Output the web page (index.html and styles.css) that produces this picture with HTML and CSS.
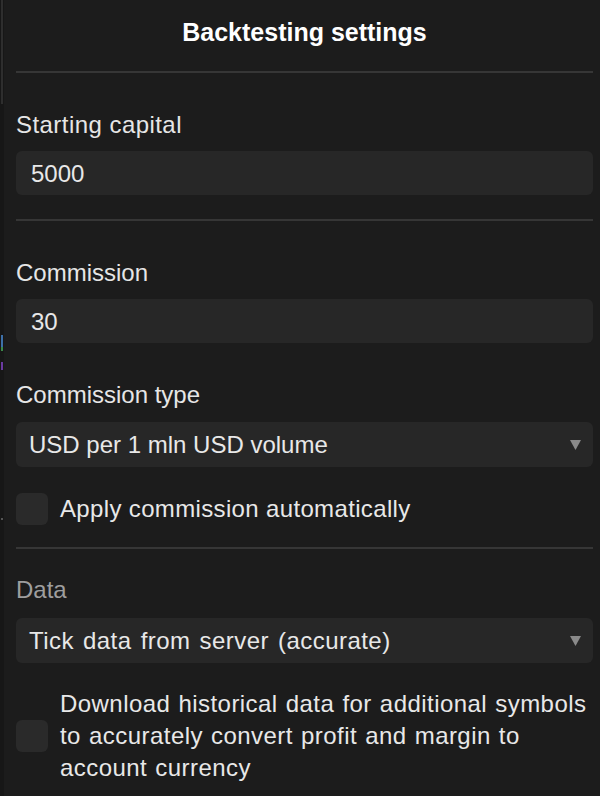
FILE: index.html
```html
<!DOCTYPE html>
<html lang="en">
<head>
<meta charset="utf-8">
<title>Backtesting settings</title>
<link rel="stylesheet" href="styles.css">
</head>
<body>
<div class="edge">
  <div class="edge-top"></div>
  <div class="edge-mark blue"></div>
  <div class="edge-mark green"></div>
  <div class="edge-mark purple"></div>
  <div class="edge-dot"></div>
</div>
<main class="panel">
  <header class="header">
    <h1 class="title">Backtesting settings</h1>
  </header>
  <div class="sep"></div>

  <section class="section">
    <div class="label label-wide">Starting capital</div>
    <div class="input">5000</div>
  </section>
  <div class="sep sep-2"></div>

  <section class="section">
    <div class="label">Commission</div>
    <div class="input">30</div>
    <div class="label label-gap">Commission type</div>
    <div class="select">
      <span class="select-text">USD per 1 mln USD volume</span>
      <svg class="arrow" width="11" height="10" viewBox="0 0 11 10"><path d="M0 0 H11 L5.5 10 Z" fill="#8a8a8a"/></svg>
    </div>
    <label class="check-row">
      <span class="checkbox"></span>
      <span class="check-text">Apply commission automatically</span>
    </label>
  </section>
  <div class="sep sep-3"></div>

  <section class="section section-data">
    <div class="label label-dim">Data</div>
    <div class="select">
      <span class="select-text select-wide">Tick data from server (accurate)</span>
      <svg class="arrow" width="11" height="10" viewBox="0 0 11 10"><path d="M0 0 H11 L5.5 10 Z" fill="#8a8a8a"/></svg>
    </div>
    <label class="check-row check-multi">
      <span class="checkbox"></span>
      <span class="check-text">Download historical data for additional symbols to accurately convert profit and margin to account currency</span>
    </label>
  </section>
</main>
</body>
</html>
```

FILE: styles.css
```css
* { box-sizing: border-box; }

html, body {
  margin: 0;
  padding: 0;
  background: #1c1c1c;
  height: 796px;
  overflow: hidden;
}

body {
  display: flex;
  font-family: "Liberation Sans", Arial, sans-serif;
  font-size: 24px;
  color: #e6e6e6;
}

.edge {
  width: 4px;
  flex: none;
  background: #171717;
  display: flex;
  flex-direction: column;
  align-items: flex-start;
}

.edge-top {
  width: 2px;
  height: 104px;
  margin-left: 1px;
  background: #2e2e2e;
}

.edge-mark {
  width: 2px;
  margin-left: 1px;
}

.edge-mark.blue { margin-top: 231px; height: 12px; background: #3d6fa8; }
.edge-mark.green { height: 4px; background: #3c8a4a; }
.edge-mark.purple { margin-top: 11px; height: 8px; background: #6a3aa0; }

.edge-dot {
  margin-top: 148px;
  margin-left: 1px;
  width: 2px;
  height: 2px;
  background: #555;
}

.panel {
  flex: 1;
  padding: 0 7px 0 12px;
}

.header {
  padding: 17px 0 24px;
  text-align: center;
}

.title {
  margin: 0;
  font-size: 25px;
  line-height: 30px;
  font-weight: bold;
  color: #ffffff;
}

.sep {
  height: 2px;
  background: #363636;
}

.section {
  padding-top: 38px;
}

.sep-2 { margin-top: 24px; }
.sep-3 { margin-top: 22px; }

.section-data { padding-top: 27px; }

.label {
  line-height: 28px;
  color: #e6e6e6;
}

.label-wide { letter-spacing: 0.45px; }

.label-gap { margin-top: 38px; }

.label-dim { color: #9e9e9e; }

.input {
  margin-top: 12px;
  height: 44px;
  padding: 2px 15px 0;
  line-height: 42px;
  background: #272727;
  border-radius: 6px;
  color: #e8e8e8;
}

.select {
  margin-top: 13px;
  height: 45px;
  padding: 1px 12px 0 13px;
  line-height: 44px;
  background: #272727;
  border-radius: 6px;
  display: flex;
  align-items: center;
  justify-content: space-between;
  color: #e8e8e8;
}

.select-wide {
  letter-spacing: 0.45px;
  word-spacing: 2px;
}

.section-data .select { margin-top: 14px; }

.arrow { flex: none; display: block; }

.check-row {
  margin-top: 25px;
  display: flex;
  align-items: center;
  gap: 12px;
}

.checkbox {
  flex: none;
  width: 32px;
  height: 32px;
  border-radius: 6px;
  background: #2a2a2a;
}

.check-text {
  line-height: 32px;
  padding-top: 1px;
  letter-spacing: 0.35px;
  color: #e8e8e8;
}

.check-multi .check-text {
  padding-top: 0;
  letter-spacing: 0.45px;
  word-spacing: 1px;
}
```
